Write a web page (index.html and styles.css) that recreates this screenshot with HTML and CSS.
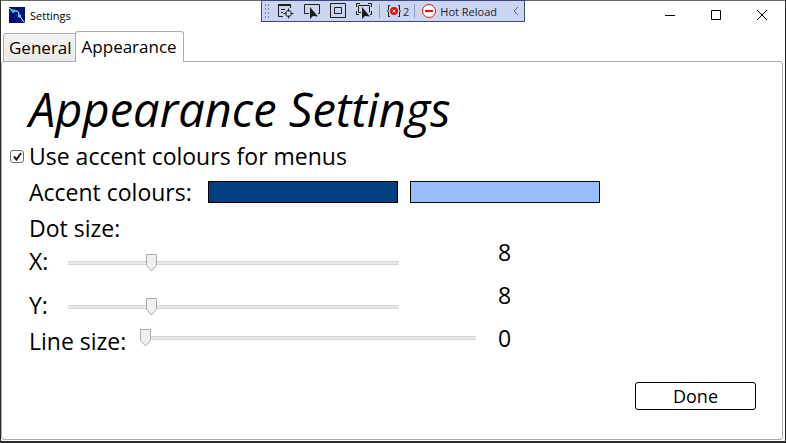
FILE: index.html
```html
<!DOCTYPE html>
<html lang="en">
<head>
<meta charset="utf-8">
<title>Settings</title>
<link rel="stylesheet" href="styles.css">
</head>
<body>
<div class="window">
  <header class="titlebar">
    <svg class="app-icon" viewBox="0 0 16 16" width="16" height="16" aria-hidden="true">
      <rect width="16" height="16" fill="#001078"/>
      <path d="M0 1L4 4H8L9.500 5L10.500 9L15.500 15.500" fill="none" stroke="#e8f4ff"/>
      <circle cx="4" cy="4" r="1.700" fill="#20e0e8"/>
      <circle cx="10.500" cy="9" r="1.700" fill="#20e0e8"/>
    </svg>
    <span class="window-title">Settings</span>
    <div class="window-controls">
      <button type="button" aria-label="Minimise"><svg width="10" height="10" viewBox="0 0 10 10"><path d="M0 5.500h10"/></svg></button>
      <button type="button" aria-label="Maximise"><svg width="10" height="10" viewBox="0 0 10 10"><path d="M.5.5h9v9h-9z"/></svg></button>
      <button type="button" aria-label="Close"><svg width="10" height="10" viewBox="0 0 10 10"><path d="M0 0l10 10M10 0L0 10"/></svg></button>
    </div>
  </header>

  <div class="debug-bar" role="toolbar" aria-label="Debug tools">
    <span class="grip"></span>
    <button type="button" aria-label="Live visual tree"><svg width="18" height="16" viewBox="0 0 18 16"><path d="M5 13.500H.5V1.500h12V5M3 6.500h4M3 9.500h2"/><path d="M.5 2h12" stroke-width="2"/><circle cx="10.500" cy="10.500" r="3"/><path d="M10.500 5.500v3M10.500 12.500v3M5.500 10.500h3M12.500 10.500h3"/></svg></button>
    <button type="button" aria-label="Select element"><svg width="18" height="16" viewBox="0 0 18 16"><path d="M5 10.500H.5v-9h15v9H14"/><path class="solid" d="M6 4v12l3-3 5 .5z"/></svg></button>
    <button type="button" aria-label="Display layout adorners"><svg width="18" height="16" viewBox="0 0 18 16"><path d="M.5.5h15v14H.5zM4.500 4.500h7v6h-7z"/></svg></button>
    <button type="button" aria-label="Track focused element"><svg width="18" height="16" viewBox="0 0 18 16"><path d="M.5 4V.5H4M12 .5h3.500V4M.5 8v3.500H3M15.500 8v3.500H14M5 9.500H2.500v-7h11v7"/><path class="solid" d="M6 4v12l3-3 5 .5z"/></svg></button>
    <span class="divider"></span>
    <button type="button" class="errors"><svg width="14" height="12" viewBox="0 0 14 12" aria-hidden="true"><path d="M3 .5H1.500V5L.5 6l1 1v4.500H3M11 .5h1.500V5l1 1-1 1v4.500H11"/><circle class="red" cx="7" cy="6" r="4"/><path class="cross" d="M5.500 4.500l3 3M8.500 4.500l-3 3"/></svg>2</button>
    <span class="divider"></span>
    <button type="button" class="reload"><svg width="14" height="14" viewBox="0 0 14 14" aria-hidden="true"><circle class="ring" cx="7" cy="7" r="6.500"/><path class="bar" d="M3 7h8"/></svg>Hot Reload</button>
    <button type="button" class="collapse" aria-label="Collapse"><svg width="6" height="10" viewBox="0 0 6 10"><path d="M5 1L1 5l4 4"/></svg></button>
  </div>

  <nav class="tabs" role="tablist">
    <button type="button" class="tab" role="tab" aria-selected="false">General</button>
    <button type="button" class="tab active" role="tab" aria-selected="true">Appearance</button>
  </nav>

  <main class="panel">
    <h1>Appearance Settings</h1>
    <div class="check-row">
      <input type="checkbox" id="accent" checked>
      <label for="accent">Use accent colours for menus</label>
    </div>
    <div class="accent-row">
      <span class="accent-label">Accent colours:</span>
      <button type="button" class="swatch dark" aria-label="Dark accent colour"></button>
      <button type="button" class="swatch light" aria-label="Light accent colour"></button>
    </div>
    <h2>Dot size:</h2>
    <div class="sizes">
      <div class="sliders">
        <div class="slider-row">
          <label for="dot-x">X:</label>
          <input class="ticks" type="range" id="dot-x" min="0" max="32" value="8">
        </div>
        <div class="slider-row">
          <label for="dot-y">Y:</label>
          <input type="range" id="dot-y" min="0" max="32" value="8">
        </div>
        <div class="slider-row line">
          <label for="line">Line size:</label>
          <input type="range" id="line" min="0" max="32" value="0">
        </div>
      </div>
      <div class="values">
        <output for="dot-x">8</output>
        <output for="dot-y">8</output>
        <output for="line">0</output>
      </div>
    </div>
    <footer class="actions">
      <button type="button" class="done">Done</button>
    </footer>
  </main>
</div>
</body>
</html>
```
FILE: styles.css
```css
* {
  box-sizing: border-box;
}

body {
  margin: 0;
  font-family: "Open Sans", "Noto Sans", sans-serif;
  font-size: 23px;
  color: #000;
  background: #fff;
}

button {
  padding: 0;
  border: 0;
  background: none;
  font: inherit;
  color: inherit;
}

.window {
  position: relative;
  display: flex;
  flex-direction: column;
  min-height: 100vh;
  border: 1px solid #2b2b2b;
  border-top-color: #666;
  border-bottom-width: 2px;
}

.titlebar {
  display: flex;
  align-items: center;
  height: 30px;
  padding-left: 8px;
  padding-bottom: 2px;
}

.window-title {
  margin-left: 5px;
  font-size: 11px;
}

.window-controls {
  display: flex;
  margin-left: auto;
}

.window-controls button {
  display: flex;
  align-items: center;
  justify-content: center;
  width: 46px;
  height: 28px;
}

.window-controls svg {
  fill: none;
  stroke: #000;
}

/* Floating debug toolbar */
.debug-bar {
  position: absolute;
  top: -1px;
  left: 50%;
  transform: translateX(-50%);
  display: flex;
  align-items: center;
  width: 264px;
  height: 22px;
  padding: 0 5px 0 2px;
  border: 1px solid #3c4680;
  background: #ccd5f0;
  color: #1e1e1e;
  font-size: 11px;
}

.debug-bar button {
  display: flex;
  align-items: center;
  margin-left: 8px;
}

.debug-bar svg {
  fill: none;
  stroke: #1e1e1e;
}

.debug-bar .solid {
  fill: #1e1e1e;
  stroke: none;
}

.grip {
  width: 6px;
  height: 16px;
  background: radial-gradient(circle, #7481b5 1px, transparent 1px) 0 0 / 3px 4px;
}

.divider {
  width: 1px;
  height: 14px;
  margin-left: 5px;
  background: #8f9bc8;
}

.debug-bar .errors {
  gap: 2px;
  margin-left: 7px;
}

.debug-bar .reload {
  gap: 4px;
  margin-left: 7px;
}

.debug-bar .collapse {
  margin-left: auto;
}

.debug-bar .collapse svg {
  stroke: #56639c;
}

.debug-bar .red {
  fill: #e51400;
  stroke: none;
}

.debug-bar .cross {
  stroke: #fff;
}

.debug-bar .ring {
  fill: #fff;
  stroke: #e51400;
}

.debug-bar .bar {
  stroke: #e51400;
  stroke-width: 2;
}

/* Tabs */
.tabs {
  display: flex;
  align-items: flex-end;
  height: 31px;
  padding-left: 2px;
  margin-bottom: -1px;
}

.tab {
  height: 29px;
  padding: 0 4px 0 5px;
  border: 1px solid #acacac;
  border-radius: 3px 3px 0 0;
  background: linear-gradient(#f3f3f3, #ebebeb);
  font-size: 17px;
  line-height: 26px;
}

.tab.active {
  z-index: 1;
  height: 31px;
  margin-left: -2px;
  padding: 0 6px;
  border-bottom: 0;
  background: #fff;
}

/* Settings page */
.panel {
  display: flex;
  flex: 1;
  flex-direction: column;
  margin: 0 2px 1px 0;
  padding: 17px 26px 29px 27px;
  border: 1px solid #acacac;
  border-radius: 3px;
}

h1 {
  margin: 0;
  font-size: 47px;
  font-style: italic;
  font-weight: 400;
  line-height: 60px;
}

h2 {
  margin: 0;
  font-size: 23px;
  font-weight: 400;
  line-height: 34px;
}

.check-row {
  display: flex;
  align-items: center;
  gap: 5px;
  height: 34px;
  margin-left: -19px;
}

.check-row input {
  appearance: none;
  width: 14px;
  height: 13px;
  margin: 0;
  border: 1px solid #707070;
  border-radius: 3px;
  background: url("data:image/svg+xml,%3Csvg xmlns='http://www.w3.org/2000/svg' viewBox='0 0 11 11'%3E%3Cpath d='M2 5.500l2.500 3L9 2' fill='none' stroke='%23212121' stroke-width='2'/%3E%3C/svg%3E") center / 11px no-repeat;
}

.accent-row {
  display: flex;
  align-items: center;
  height: 38px;
}

.accent-label {
  width: 179px;
}

.swatch {
  width: 190px;
  height: 22px;
  margin-right: 12px;
  border: 1px solid #000;
}

.swatch.dark {
  background: #004080;
}

.swatch.light {
  background: #97bdff;
}

.sizes {
  display: flex;
}

.sliders {
  width: 469px;
  padding-top: 2px;
}

.slider-row {
  display: flex;
  align-items: center;
  height: 32px;
  margin-bottom: 12px;
}

.slider-row label {
  width: 34px;
  line-height: 28px;
  padding-bottom: 4px;
}

.slider-row.line {
  margin-top: -10px;
  margin-bottom: 0;
}

.slider-row.line label {
  width: 111px;
  padding-bottom: 0;
}

.slider-row.line input {
  align-self: flex-start;
}

input[type="range"] {
  appearance: none;
  width: 341px;
  height: 26px;
  margin: 0;
  background: linear-gradient(#d6d6d6 1px, #e7eaea 1px 3px, #d6d6d6 3px) center / calc(100% - 10px) 4px no-repeat;
}

input[type="range"].ticks {
  background:
    linear-gradient(#d6d6d6 1px, #e7eaea 1px 3px, #d6d6d6 3px) center / calc(100% - 10px) 4px no-repeat,
    linear-gradient(90deg, #e5e5e5 1px, transparent 1px) 5px 100% / calc((100% - 11px) / 8) 1px repeat-x;
}

input[type="range"]::-webkit-slider-thumb {
  appearance: none;
  width: 11px;
  height: 18px;
  background: url("data:image/svg+xml,%3Csvg xmlns='http://www.w3.org/2000/svg' viewBox='0 0 11 18'%3E%3Cpath d='M.5.5h10v11l-5 5.500-5-5.500z' fill='%23f0f0f0' stroke='%23acacac'/%3E%3C/svg%3E") center / 11px 18px no-repeat;
}

.values {
  display: flex;
  flex-direction: column;
  margin-top: -14px;
  line-height: 43px;
}

.actions {
  display: flex;
  justify-content: flex-end;
  margin-top: auto;
}

.done {
  width: 121px;
  height: 28px;
  border: 1px solid #000;
  border-radius: 3px;
  font-size: 18px;
  line-height: 24px;
}
```
